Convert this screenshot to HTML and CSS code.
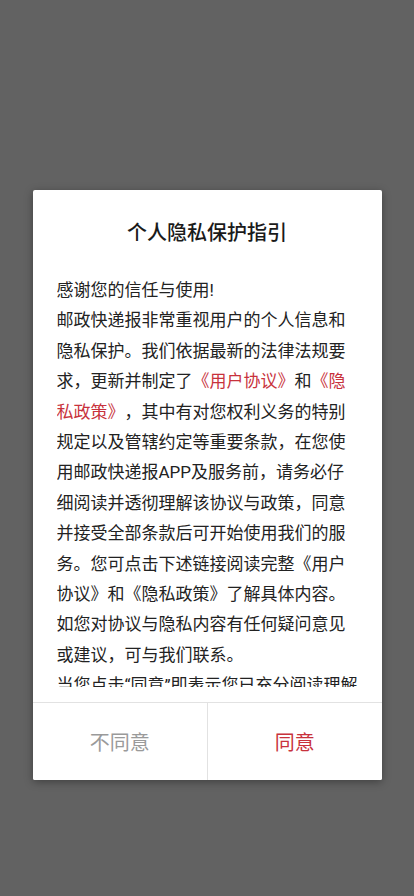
FILE: index.html
```html
<!doctype html>
<html lang="zh-CN">
<head>
<meta charset="utf-8">
<meta name="viewport" content="width=device-width, initial-scale=1">
<title>个人隐私保护指引</title>
<link rel="stylesheet" href="styles.css">
</head>
<body>

<!-- privacy consent dialog -->

<div class="overlay">
	<div class="dialog">
		<h1 class="dialog-title">个人隐私保护指引</h1>

		<div class="dialog-body">
			<div class="dialog-scroll">
				<p>感谢您的信任与使用!</p>
				<p>邮政快递报非常重视用户的个人信息和隐私保护。我们依据最新的法律法规要求，更新并制定了<a class="doc-link" href="#agreement">《用户协议》</a>和<a class="doc-link" href="#privacy">《隐私政策》</a>，其中有对您权利义务的特别规定以及管辖约定等重要条款，在您使用邮政快递报APP及服务前，请务必仔细阅读并透彻理解该协议与政策，同意并接受全部条款后可开始使用我们的服务。您可点击下述链接阅读完整《用户协议》和《隐私政策》了解具体内容。</p>
				<p>如您对协议与隐私内容有任何疑问意见或建议，可与我们联系。</p>
				<p>当您点击“同意”即表示您已充分阅读理解并同意上述协议的全部内容。</p>
			</div>
		</div>

		<div class="dialog-actions">
			<button class="action action-decline" type="button">不同意</button>
			<button class="action action-accept" type="button">同意</button>
		</div>
	</div>
</div>

</body>
</html>
```

FILE: styles.css
```css
/* ====  Base  ==== */

* {
	box-sizing: border-box;
}

html, body {
	margin: 0;
	height: 100%;
}

body {
	background:  #626262;
	font-family: Roboto, "Noto Sans CJK SC", sans-serif;
	color:       #222;
}

.overlay {
	display:         flex;
	justify-content: center;
	align-items:     flex-start;
	padding-top:     190px;
}


/* ====  Dialog  ==== */

.dialog {
	width:         349px;
	background:    #fff;
	border-radius: 2px;
	box-shadow:    0 2px 8px rgba(0, 0, 0, 0.35);
	overflow:      hidden;
}

.dialog-title {
	margin:      0;
	padding:     29px 24px 0;
	font-size:   20px;
	font-weight: 500;
	line-height: 28px;
	text-align:  center;
	color:       #1a1a1a;
}

.dialog-body {
	margin-top: 28px;
	padding:    0 22px 15px 24px;
}

/* fixed-height scroll box: the last line is cut at its bottom edge */
.dialog-scroll {
	height:            412px;
	overflow:          hidden;
	font-size:         17px;
	line-height:       30.4px;
	text-spacing-trim: space-all; /* keep 》， full width, like the phone does */
}

.dialog-scroll p {
	margin: 0;
}

.doc-link {
	color:           #c8323c;
	text-decoration: none;
}


/* ====  Buttons  ==== */

.dialog-actions {
	display:               grid;
	grid-template-columns: 1fr 1fr;
	height:                78px;
	border-top:            1px solid #e2e2e2;
}

.action {
	background:  #fff;
	border:      0;
	outline:     0;
	font-family: Roboto, "Noto Sans CJK SC", sans-serif;
	font-size:   20px;
	padding:     0;
}

.action-decline {
	color: #9a9a9a;
}

.action-accept {
	color:       #c8323c;
	border-left: 1px solid #e2e2e2;
}
```
